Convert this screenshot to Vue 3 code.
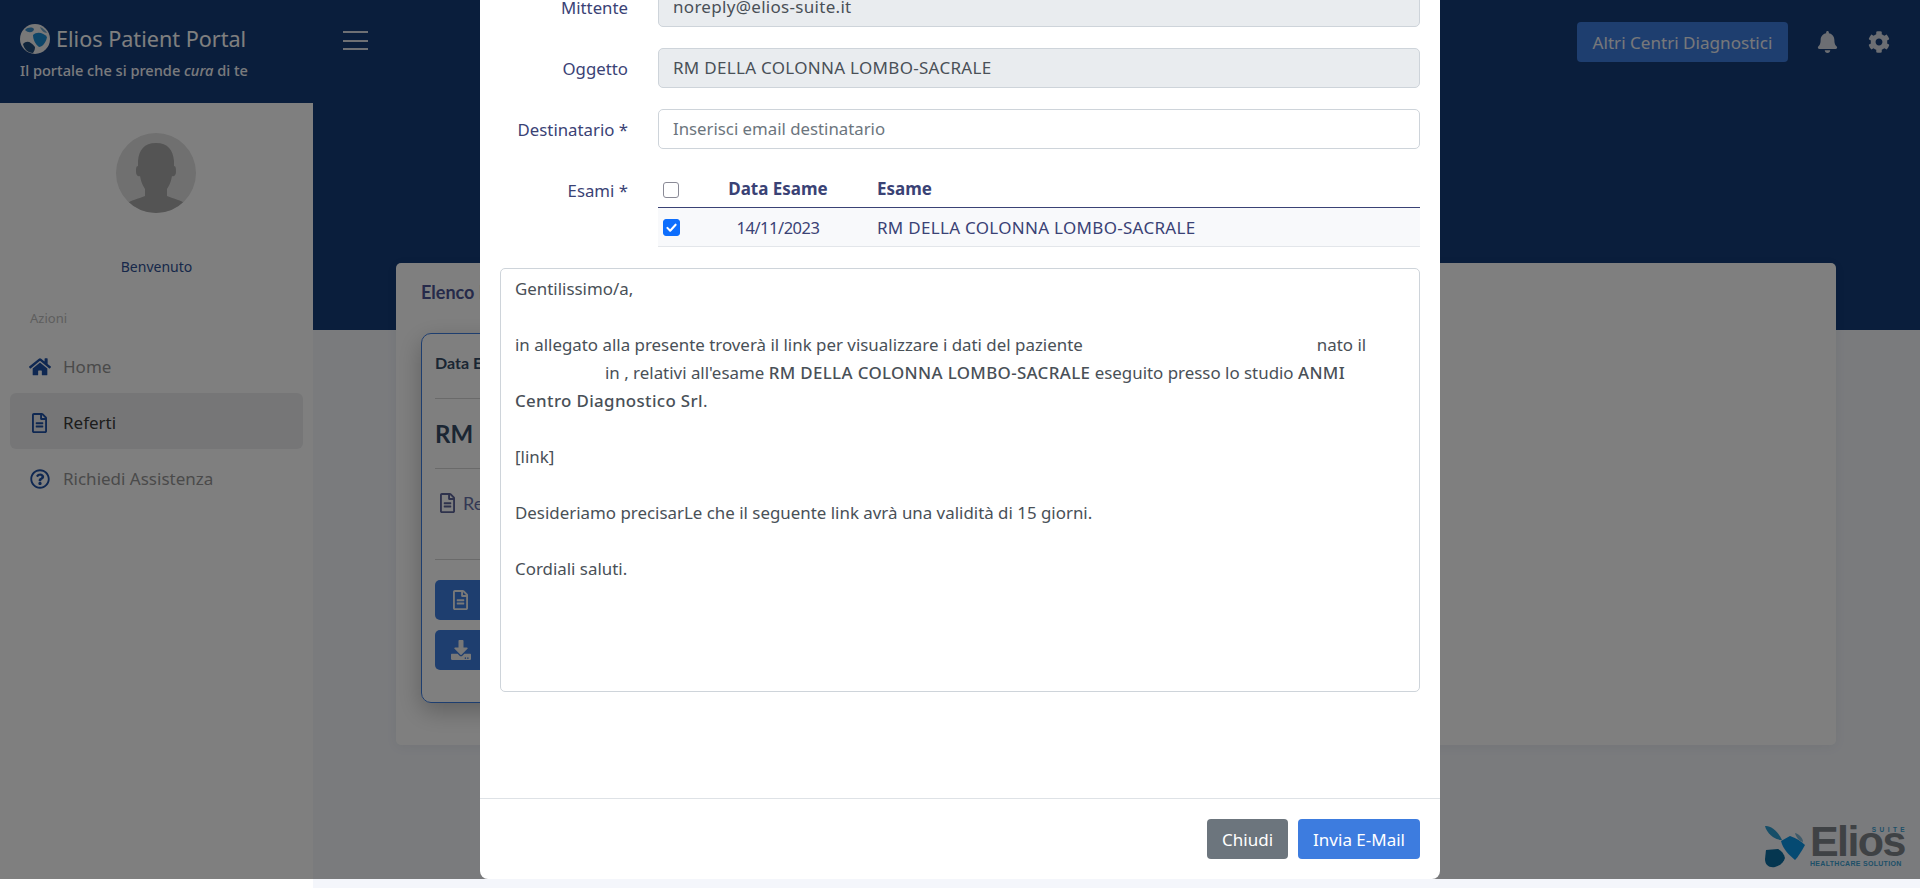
<script setup>
const menu = [
  { label: 'Home', icon: 'home', view: '0 0 576 512', w: 22 },
  { label: 'Referti', icon: 'file', view: '0 0 384 512', w: 15, active: true },
  { label: 'Richiedi Assistenza', icon: 'help', view: '0 0 512 512', w: 20 },
]
const paths = {
  home: 'M280.37 148.26L96 300.11V464a16 16 0 0 0 16 16l112.06-.29a16 16 0 0 0 15.92-16V368a16 16 0 0 1 16-16h64a16 16 0 0 1 16 16v95.64a16 16 0 0 0 16 16.05L464 480a16 16 0 0 0 16-16V300L295.67 148.26a12.19 12.19 0 0 0-15.3 0zM571.6 251.47L488 182.56V44.05a12 12 0 0 0-12-12h-56a12 12 0 0 0-12 12v72.61L318.47 43a48 48 0 0 0-61 0L4.34 251.47a12 12 0 0 0-1.6 16.9l25.5 31A12 12 0 0 0 45.15 301l235.22-193.74a12.19 12.19 0 0 1 15.3 0L530.9 301a12 12 0 0 0 16.9-1.6l25.5-31a12 12 0 0 0-1.7-16.93z',
  file: 'M288 248v28c0 6.6-5.4 12-12 12H108c-6.6 0-12-5.4-12-12v-28c0-6.6 5.4-12 12-12h168c6.6 0 12 5.4 12 12zm-12 72H108c-6.6 0-12 5.4-12 12v28c0 6.6 5.4 12 12 12h168c6.6 0 12-5.4 12-12v-28c0-6.6-5.4-12-12-12zm108-188.1V464c0 26.5-21.5 48-48 48H48c-26.5 0-48-21.5-48-48V48C0 21.5 21.5 0 48 0h204.1C264.8 0 277 5.1 286 14.1L369.9 98c9 8.9 14.1 21.2 14.1 33.9zm-128-80V128h76.1L256 51.9zM336 464V176H232c-13.3 0-24-10.7-24-24V48H48v416h288z',
  help: 'M256 8C119.043 8 8 119.083 8 256c0 136.997 111.043 248 248 248s248-111.003 248-248C504 119.083 392.957 8 256 8zm0 448c-110.532 0-200-89.431-200-200 0-110.495 89.472-200 200-200 110.491 0 200 89.471 200 200 0 110.53-89.431 200-200 200zm107.244-255.2c0 67.052-72.421 68.084-72.421 92.863V300c0 6.627-5.373 12-12 12h-45.647c-6.627 0-12-5.373-12-12v-8.659c0-35.745 27.1-50.034 47.579-61.516 17.561-9.845 28.324-16.541 28.324-29.579 0-17.246-21.999-28.693-39.784-28.693-23.189 0-33.894 10.977-48.942 29.969-4.057 5.12-11.46 6.071-16.666 2.124l-27.824-21.098c-5.107-3.872-6.251-11.066-2.644-16.363C184.846 131.491 214.94 112 261.794 112c49.071 0 101.45 38.304 101.45 88.8zM298 368c0 23.159-18.841 42-42 42s-42-18.841-42-42 18.841-42 42-42 42 18.841 42 42z',
  bell: 'M224 512c35.32 0 63.97-28.65 63.97-64H160.03c0 35.35 28.65 64 63.97 64zm215.39-149.71c-19.32-20.76-55.47-51.99-55.47-154.29 0-77.7-54.48-139.9-127.94-155.16V32c0-17.67-14.32-32-31.98-32s-31.98 14.33-31.98 32v20.84C118.56 68.1 64.08 130.3 64.08 208c0 102.3-36.15 133.53-55.47 154.29-6 6.45-8.66 14.16-8.61 21.71.11 16.4 12.98 32 32.1 32h383.8c19.12 0 32-15.6 32.1-32 .05-7.55-2.61-15.27-8.61-21.71z',
  cog: 'M487.4 315.7l-42.6-24.6c4.3-23.2 4.3-47 0-70.2l42.6-24.6c4.9-2.8 7.1-8.6 5.5-14-11.1-35.6-30-67.8-54.7-94.6-3.8-4.1-10-5.1-14.8-2.3L380.8 110c-17.9-15.4-38.5-27.3-60.8-35.1V25.8c0-5.6-3.9-10.5-9.4-11.7-36.7-8.2-74.3-7.8-109.2 0-5.5 1.2-9.4 6.1-9.4 11.7V75c-22.2 7.9-42.8 19.8-60.8 35.1L88.7 85.5c-4.9-2.8-11-1.9-14.8 2.3-24.7 26.7-43.6 58.9-54.7 94.6-1.7 5.4.6 11.2 5.5 14L67.3 221c-4.3 23.2-4.3 47 0 70.2l-42.6 24.6c-4.9 2.8-7.1 8.6-5.5 14 11.1 35.6 30 67.8 54.7 94.6 3.8 4.1 10 5.1 14.8 2.3l42.6-24.6c17.9 15.4 38.5 27.3 60.8 35.1v49.2c0 5.6 3.9 10.5 9.4 11.7 36.7 8.2 74.3 7.8 109.2 0 5.5-1.2 9.4-6.1 9.4-11.7v-49.2c22.2-7.9 42.8-19.8 60.8-35.1l42.6 24.6c4.9 2.8 11 1.9 14.8-2.3 24.7-26.7 43.6-58.9 54.7-94.6 1.5-5.5-.7-11.3-5.6-14.1zM256 336c-44.1 0-80-35.9-80-80s35.9-80 80-80 80 35.9 80 80-35.9 80-80 80z',
  download: 'M216 0h80c13.3 0 24 10.7 24 24v168h87.7c17.8 0 26.7 21.5 14.1 34.1L269.7 378.3c-7.5 7.5-19.8 7.5-27.3 0L90.1 226.1c-12.6-12.6-3.7-34.1 14.1-34.1H192V24c0-13.3 10.7-24 24-24zm296 376v112c0 13.3-10.7 24-24 24H24c-13.3 0-24-10.7-24-24V376c0-13.3 10.7-24 24-24h146.7l49 49c20.1 20.1 52.5 20.1 72.6 0l49-49H488c13.3 0 24 10.7 24 24zm-124 88c0-11-9-20-20-20s-20 9-20 20 9 20 20 20 20-9 20-20zm64 0c0-11-9-20-20-20s-20 9-20 20 9 20 20 20 20-9 20-20z',
}
</script>

<template>
  <div class="page">
    <header class="topbar">
      <div class="brand">
        <div class="brand-row">
          <svg class="globe" viewBox="0 0 30 30">
            <circle cx="15" cy="15" r="15" fill="#f0f0f0" />
            <path d="M5 6C8 3 12 3 14 5C14 8 9 10 5 6Z" fill="#3a8cc8" />
            <path d="M13 11C17 7 24 9 27 13C26 19 22 23 19 23C15 20 13 15 13 11Z" fill="#1a8ad0" />
            <path d="M20 3C23 4 26 7 27 9C24 9 21 6 20 3Z" fill="#70a4c8" />
            <path d="M3 20C7 16 11 18 15 23C15 26 14 27 13 29C8 29 4 25 3 20Z" fill="#204a78" />
          </svg>
          <span class="brand-name">Elios Patient Portal</span>
        </div>
        <div class="brand-sub">Il portale che si prende <em>cura</em> di te</div>
      </div>
      <div class="burger"><i></i><i></i><i></i></div>
      <div class="top-actions">
        <button class="btn btn-primary top-btn">Altri Centri Diagnostici</button>
        <svg class="top-icon bell" viewBox="0 0 448 512"><path :d="paths.bell" /></svg>
        <svg class="top-icon cog" viewBox="0 0 512 512"><path :d="paths.cog" /></svg>
      </div>
    </header>

    <div class="below">
      <aside class="sidebar">
        <svg class="avatar" viewBox="0 0 80 80">
          <clipPath id="avatar-clip"><circle cx="40" cy="40" r="40" /></clipPath>
          <circle cx="40" cy="40" r="40" fill="#e0e0e0" />
          <path clip-path="url(#avatar-clip)" fill="#a8a8a8" d="M40 10C28 10 23 17 22 28L22 33C20 33 20 36 20 39C20 42 22 44 24 43C25 49 27 53 29 56L29 63C22 66 15 67 10 71L10 80L70 80L70 71C65 67 58 66 51 63L51 56C53 53 55 49 56 43C58 44 60 42 60 39C60 36 60 33 58 33L58 28C57 17 52 10 40 10Z" />
        </svg>
        <div class="welcome">Benvenuto</div>
        <div class="section">Azioni</div>
        <nav class="menu">
          <a v-for="item in menu" :key="item.label" class="menu-item" :class="{ active: item.active }">
            <span class="menu-icon">
              <svg :viewBox="item.view" :style="{ width: item.w + 'px' }"><path :d="paths[item.icon]" /></svg>
            </span>
            <span>{{ item.label }}</span>
          </a>
        </nav>
      </aside>

      <main class="main">
        <section class="card">
          <h2 class="card-title">Elenco Referti</h2>
          <article class="report">
            <div class="report-date">Data Esame: 14/11/2023</div>
            <hr />
            <div class="report-name">RM DELLA COLONNA LOMBO-SACRALE</div>
            <hr />
            <div class="report-file">
              <svg viewBox="0 0 384 512"><path :d="paths.file" /></svg>
              <span>Referto</span>
            </div>
            <hr class="wide" />
            <button class="report-btn">
              <svg class="f" viewBox="0 0 384 512"><path :d="paths.file" /></svg>
            </button>
            <button class="report-btn">
              <svg class="d" viewBox="0 0 512 512"><path :d="paths.download" /></svg>
            </button>
          </article>
        </section>
      </main>
    </div>

    <div class="watermark">
      <svg class="wm-mark" viewBox="0 0 40 43">
        <path d="M0 1C5 0 13 6 17 15C10 15 2 9 0 1Z" fill="#2c9cd0" />
        <path d="M16 16L25 11C31 13 36 16 40 20C36 27 33 32 30 35C24 30 18 24 16 16Z" fill="#0a94e4" />
        <path d="M30 8C34 9 38 13 38 17C34 16 31 12 30 8Z" fill="#7ab4d4" />
        <path d="M1 25L13 24C17 26 19 29 20 33C19 37 15 41 10 42C4 43 0 40 0 34Z" fill="#0a6ca0" />
      </svg>
      <div class="wm-text">
        <span class="wm-name">Elios</span>
        <span class="wm-suite">SUITE</span>
        <span class="wm-sol">HEALTHCARE SOLUTION</span>
      </div>
    </div>

    <div class="backdrop"></div>

    <div class="modal-layer">
      <div class="modal">
        <div class="modal-body">
          <div class="row">
            <label>Mittente</label>
            <div class="input disabled">noreply@elios-suite.it</div>
          </div>
          <div class="row">
            <label>Oggetto</label>
            <div class="input disabled">RM DELLA COLONNA LOMBO-SACRALE</div>
          </div>
          <div class="row">
            <label>Destinatario *</label>
            <div class="input placeholder">Inserisci email destinatario</div>
          </div>
          <div class="row">
            <label class="exam-label">Esami *</label>
            <table class="exams">
              <thead>
                <tr>
                  <th class="c1"><span class="check"></span></th>
                  <th class="c2">Data Esame</th>
                  <th>Esame</th>
                </tr>
              </thead>
              <tbody>
                <tr>
                  <td class="c1">
                    <span class="check on">
                      <svg viewBox="0 0 16 16"><path d="M3.6 8.4L6.6 11.4L12.4 5" fill="none" stroke="#fff" stroke-width="2.2" stroke-linecap="round" stroke-linejoin="round" /></svg>
                    </span>
                  </td>
                  <td class="c2 date">14/11/2023</td>
                  <td class="name">RM DELLA COLONNA LOMBO-SACRALE</td>
                </tr>
              </tbody>
            </table>
          </div>
          <div class="editor">
            <p>Gentilissimo/a,</p>
            <p class="blank"></p>
            <p>in allegato alla presente troverà il link per visualizzare i dati del paziente<span class="redact-name"></span>nato il</p>
            <p><span class="redact-date"></span>in , relativi all'esame <b>RM DELLA COLONNA LOMBO-SACRALE</b> eseguito presso lo studio <b>ANMI</b></p>
            <p><b>Centro Diagnostico Srl</b>.</p>
            <p class="blank"></p>
            <p>[link]</p>
            <p class="blank"></p>
            <p>Desideriamo precisarLe che il seguente link avrà una validità di 15 giorni.</p>
            <p class="blank"></p>
            <p>Cordiali saluti.</p>
          </div>
        </div>
        <footer class="modal-footer">
          <button class="btn btn-secondary">Chiudi</button>
          <button class="btn btn-primary">Invia E-Mail</button>
        </footer>
      </div>
    </div>
  </div>
</template>

<style>
html, body { margin: 0; background: #fff; overflow: hidden; }
</style>

<style scoped>
* { box-sizing: border-box; }
.page {
  position: relative;
  width: 1920px;
  height: 888px;
  overflow: hidden;
  font-family: "Noto Sans", Lato, sans-serif;
  font-size: 16px;
  color: #495057;
}
.topbar {
  height: 103px;
  background: #143c78;
  display: flex;
  align-items: flex-start;
  color: #fff;
}
.brand { width: 343px; padding: 24px 0 0 20px; }
.brand-row { display: flex; align-items: center; gap: 6px; height: 30px; }
.globe { width: 30px; height: 30px; flex: none; }
.brand-name { font-size: 21.6px; line-height: 30px; }
.brand-sub { margin-top: 6px; font-size: 14.6px; line-height: 20px; font-weight: 500; color: #f4f6fb; white-space: nowrap; }
.burger { width: 25px; height: 19px; margin-top: 31px; display: flex; flex-direction: column; justify-content: space-between; }
.burger i { display: block; height: 2px; background: #dde0e8; }
.top-actions { margin-left: auto; display: flex; align-items: center; padding: 22px 30px 0 0; }
.top-icon { fill: #d8dde6; height: 22px; }
.bell { width: 21px; margin-left: 29px; }
.cog { width: 22px; margin-left: 30px; }
.btn {
  border: 0;
  height: 40px;
  border-radius: 4px;
  font: inherit;
  color: #fff;
  padding: 0 15px;
}
.btn-primary { background: #3d7cdf; }
.btn-secondary { background: #6c757d; }
.top-btn { width: 211px; padding: 0; color: #eef0f5; font-size: 17.1px; }

.below { display: flex; height: 785px; }
.sidebar { width: 313px; flex: none; background: #fff; height: 776px; padding-top: 30px; display: flex; flex-direction: column; }
.avatar { width: 80px; height: 80px; align-self: center; margin-right: 1px; }
.welcome { margin-top: 43px; text-align: center; font-size: 14px; line-height: 22px; color: #2e5094; }
.section { margin: 30px 0 0 30px; font-size: 13px; line-height: 20px; color: #bcbcbc; }
.menu { margin: 9px 10px 0; display: flex; flex-direction: column; }
.menu-item { height: 56px; padding-top: 3px; display: flex; align-items: center; border-radius: 6px; font-size: 17px; color: #959595; }
.menu-item.active { background: #ecedef; color: #3a3a3a; }
.menu-icon { width: 53px; padding-left: 6px; display: flex; justify-content: center; flex: none; }
.menu-icon svg { fill: #1f50a4; display: block; }
.main {
  flex: 1;
  height: 785px;
  padding: 160px 84px 0 83px;
  background: linear-gradient(#143c78 227px, #f4f6fb 227px);
}
.card {
  height: 482px;
  background: #fff;
  border-radius: 5px;
  padding: 18px 25px 0;
  box-shadow: 0 2px 12px rgba(40, 50, 70, 0.06);
  font-family: Lato, "Noto Sans", sans-serif;
}
.card-title { margin: 0; font-size: 18px; line-height: 22px; font-weight: 700; color: #4c5494; }
.report {
  margin-top: 30px;
  width: 420px;
  height: 370px;
  border: 1px solid #3d7cdf;
  border-radius: 10px;
  padding: 13px 13px 0;
  box-shadow: 0 8px 24px rgba(0, 0, 0, 0.25);
}
.report hr { margin: 0; border: 0; border-top: 1px solid #d5d5d5; }
.report-date { height: 51px; line-height: 32px; font-size: 16px; font-weight: 700; color: #364c66; white-space: nowrap; }
.report-name { height: 69px; line-height: 70px; font-size: 24px; font-weight: 700; color: #364c66; white-space: nowrap; }
.report-file { height: 90px; padding: 22px 0 0 5px; display: flex; gap: 8px; align-items: flex-start; color: #6670a8; font-size: 18px; line-height: 24px; }
.report-file svg { width: 15px; height: 20px; fill: #5d6498; margin-top: 2px; }
.report-btn { display: flex; align-items: center; width: 120px; height: 40px; border: 0; border-radius: 5px; background: #3d7cdf; margin-top: 10px; padding: 0 0 0 16px; }
.report hr.wide { margin-bottom: 20px; }
.report hr.wide + .report-btn { margin-top: 0; }
.report-btn svg { fill: #f0f0f0; }
.report-btn .f { width: 15px; height: 20px; margin-left: 2px; }
.report-btn .d { width: 20px; height: 20px; }

.watermark { position: absolute; left: 1765px; top: 825px; display: flex; gap: 5px; }
.wm-mark { width: 40px; height: 43px; }
.wm-text { position: relative; width: 95px; height: 43px; font-family: "Liberation Sans", sans-serif; font-weight: 700; white-space: nowrap; }
.wm-name { position: absolute; left: 0; top: -9px; font-size: 43px; line-height: 50px; letter-spacing: -1.6px; color: #7e848a; }
.wm-suite { position: absolute; right: 0; top: 1px; font-size: 6.5px; line-height: 7px; letter-spacing: 3.4px; margin-right: -3px; color: #3ca0d0; }
.wm-sol { position: absolute; left: 0; bottom: 0; font-size: 7px; line-height: 8px; letter-spacing: 0.3px; color: #3ca0d0; }

.backdrop { position: absolute; left: 0; right: 0; top: 0; height: 879px; background: rgba(0, 0, 0, 0.5); }
.modal-layer {
  position: absolute;
  left: 0;
  right: 0;
  top: 0;
  height: 879px;
  display: flex;
  justify-content: center;
  align-items: flex-end;
  overflow: hidden;
}
.modal { width: 960px; flex: none; background: #fff; border-radius: 0 0 8px 8px; }
.modal-body { padding: 0 20px 106px; }
.row { display: flex; margin-bottom: 21px; }
.row label {
  width: 128px;
  margin-right: 30px;
  flex: none;
  text-align: right;
  line-height: 41px;
  height: 40px;
  font-size: 16.8px;
  color: #3a4275;
}
.input {
  flex: 1;
  height: 40px;
  border: 1px solid #ced4da;
  border-radius: 5px;
  padding: 0 14px;
  line-height: 38px;
  font-size: 17px;
  letter-spacing: 0.3px;
  color: #495057;
}
.disabled { background: #e9ecef; }
.placeholder { color: #6c757d; font-size: 16.8px; letter-spacing: 0; }
.row .exam-label { line-height: 42px; }
.exams { flex: 1; border-collapse: separate; border-spacing: 0; table-layout: fixed; font-size: 17px; color: #3a4275; }
.exams th { height: 38px; padding: 0 0 0 5px; text-align: left; font-weight: 700; border-bottom: 1px solid #3a4275; }
.exams th .check { margin-top: 1px; }
.exams td { height: 39px; padding: 1px 0 0 5px; background: #f8f9fb; border-bottom: 1px solid #e3e6ea; }
.exams .c1 { width: 26px; padding: 1px 0 0 5px; }
.exams .c2 { width: 188px; text-align: center; padding: 1px 0 0; }
.exams th.c2 { padding: 0; }
.exams .date { letter-spacing: -0.5px; font-size: 16.5px; }
.exams .name { letter-spacing: 0.3px; }
.check { display: block; width: 16px; height: 16px; border: 1px solid #8a8a96; border-radius: 3px; background: #fff; }
.check.on { background: #0d6efd; border-color: #0d6efd; width: 17px; height: 17px; border-radius: 3px; }
.check svg { display: block; width: 100%; height: 100%; }
.editor {
  height: 424px;
  border: 1px solid #ced4da;
  border-radius: 5px;
  padding: 6px 14px;
  font-size: 16.9px;
  line-height: 28px;
  color: #495057;
}
.editor p { margin: 0; white-space: nowrap; height: 28px; }
.editor b { font-weight: 500; letter-spacing: 0.35px; }
.redact-name { display: inline-block; width: 234px; }
.redact-date { display: inline-block; width: 90px; }
.modal-footer {
  height: 81px;
  border-top: 1px solid #dee2e6;
  padding: 20px;
  display: flex;
  justify-content: flex-end;
  gap: 10px;
}
.modal-footer .btn { font-size: 17px; }
</style>
